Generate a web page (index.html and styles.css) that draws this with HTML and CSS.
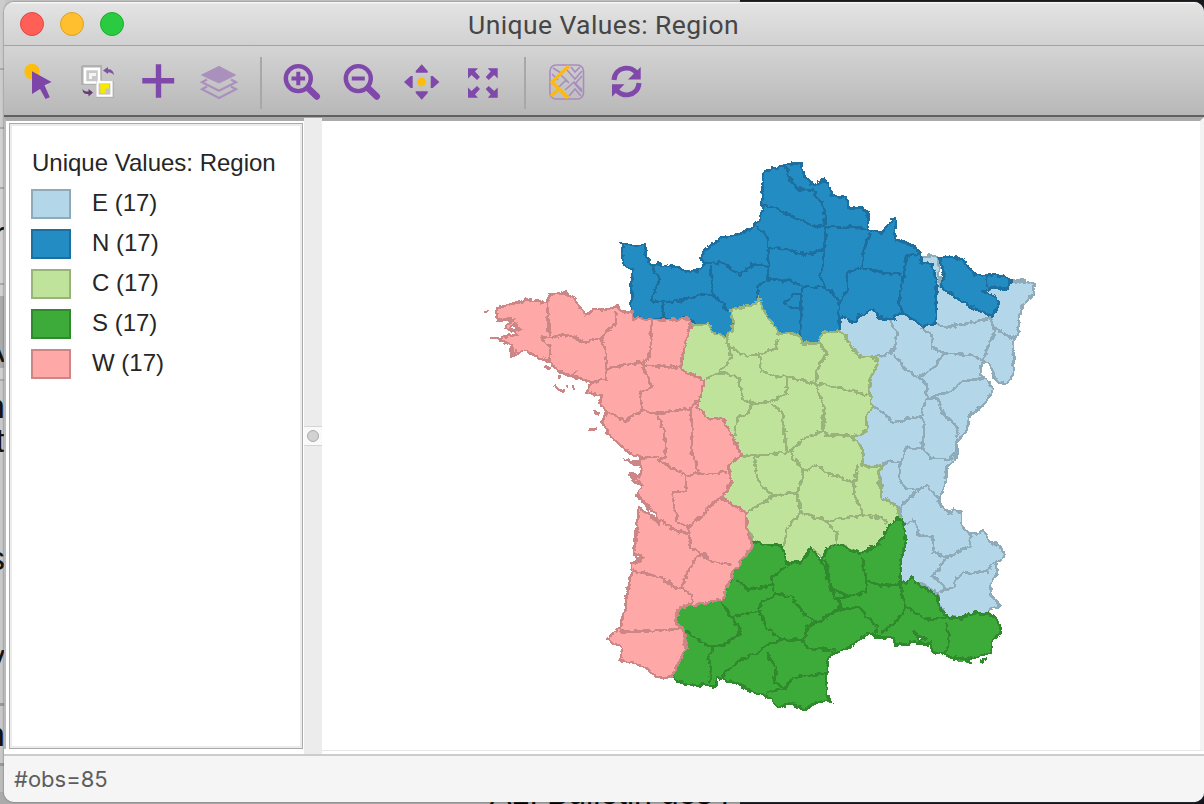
FILE: index.html
```html
<!DOCTYPE html>
<html lang="en">
<head>
<meta charset="utf-8">
<title>Unique Values: Region</title>
<link rel="stylesheet" href="styles.css">
</head>
<body>
<div class="desktop">
  <div class="behind-top"></div>
  <div class="behind-left">
    <span style="top:218px">r</span><span style="top:335px">A</span><span style="top:391px">n</span><span style="top:425px">t</span><span style="top:543px">s</span><span style="top:641px">y</span><span style="top:719px">n</span>
  </div>
  <div class="behind-bottom"><span>ALI Bulletin des l</span></div>
  <div class="window">
    <header class="titlebar">
      <div class="lights"><i class="red"></i><i class="yellow"></i><i class="green"></i></div>
      <h1>Unique Values: Region</h1>
    </header>
    <nav class="toolbar">
      <button><svg viewBox="0 0 36 36"><circle cx="12" cy="7.5" r="7.7" fill="#fdbd0c"/><path d="M12 7.2 31.6 18 24.5 21.2 29.8 33.3 25.5 35 20 25 12 30Z" fill="#7e45a8"/></svg></button>
      <button><svg viewBox="0 0 36 36"><path d="M2 2H21V16M2 2V20H16" fill="none" stroke="#b0b0b0" stroke-width="2"/><rect x="5" y="5" width="14" height="13.5" fill="#c9c9c9" stroke="#fff" stroke-width="2.5"/><path d="M9 9H16V12H12V15H9Z" fill="#f4f4f4"/><rect x="16" y="17" width="18" height="17" fill="#b0b0b0"/><rect x="17.5" y="18.2" width="14" height="13.5" fill="#c4c4c4" stroke="#fff" stroke-width="2.2"/><path d="M20.3 20H29V24.5H25.5V29H20.3Z" fill="#f5ea00"/><path d="M23 6.5 28 3V5.2C31.5 5 33.5 7 34 11 31.5 8.8 30 8.4 28 8.6V10Z" fill="#8153a0"/><path d="M13 28.5 8.5 25V27.5C5 27.5 4 27 2.5 25 2.5 29 5 30.2 8.5 30V32.5Z" fill="#653a79"/></svg></button>
      <button><svg viewBox="0 0 36 36"><path d="M18.5.3V33.8M2.3 16.7H34.2" fill="none" stroke="#7f48aa" stroke-width="5.4"/></svg></button>
      <button><svg viewBox="0 0 36 36"><g fill="#aa91bd" stroke="#aa91bd"><path d="M19 2.4 35.5 11 19 19 1.5 11Z"/><path d="M7 15.5 2 18.3 19 26.7 36 18.3 31 15.5 M7 22.5 2 25.3 19 34 36 25.3 31 22.5" fill="none" stroke-width="2.2"/></g></svg></button>
      <hr>
      <button><svg viewBox="0 0 36 36"><g fill="none" stroke="#7f48aa"><circle cx="15.3" cy="14.6" r="12.5" stroke-width="4.4"/><path d="M25 24 33.7 32.4" stroke-width="6.6" stroke-linecap="round"/><path d="M8.5 14.5H22.1M15.3 7.7V21.3" stroke-width="4"/></g></svg></button>
      <button><svg viewBox="0 0 36 36"><g fill="none" stroke="#7f48aa"><circle cx="15.3" cy="14.6" r="12.5" stroke-width="4.4"/><path d="M25 24 33.7 32.4" stroke-width="6.6" stroke-linecap="round"/><path d="M8.8 14.5H21.8" stroke-width="4"/></g></svg></button>
      <button><svg viewBox="0 0 36 36"><circle cx="18.7" cy="18" r="4.4" fill="#fdbd0c"/><path d="M18.7.3 24.7 7V8.7H12.7V7ZM18.7 35.7 24.7 29V27.3H12.7V29ZM1 18 7.7 12H9.7V24H7.7ZM36.4 18 29.7 12H27.7V24H29.7Z" fill="#7f48aa"/></svg></button>
      <button><svg viewBox="0 0 36 36"><g fill="#7f48aa"><path d="M5 4.3H15L12 7.5 17 13 14 16 8.5 11 5 14.5Z"/><path d="M34.7 4.3H24.7L27.7 7.5 22.7 13 25.7 16 31.2 11 34.7 14.5Z"/><path d="M5 33.7H15L12 30.5 17 25 14 22 8.5 27 5 23.5Z"/><path d="M34.7 33.7H24.7L27.7 30.5 22.7 25 25.7 22 31.2 27 34.7 23.5Z"/></g></svg></button>
      <hr class="second">
      <button><svg viewBox="0 0 36 36"><g fill="none" stroke="#a98cbf" stroke-width="1.6"><rect x="2" y="1" width="33.5" height="34" rx="6"/><path d="M13 11 21 19M19 6 27 15 34 7M23 3 27 8 32 3M17 26 26 18 34 26M21 32 27 25 33 32M34 12 27 20 34 28M4 10 10 16M5 4 13 9M10 24 18 16"/></g><path d="M21 2 4 18 20 34M3 32 12 24" fill="none" stroke="#fdb913" stroke-width="3.3"/></svg></button>
      <button><svg viewBox="0 0 36 36"><g fill="none" stroke="#7f48aa" stroke-width="5"><path d="M6 16C7 2 24 1 29 10M31 19C30 33 13 34 8 25"/></g><path d="M32.7 3V15.5H20ZM4 32.7V20.3H16.5Z" fill="#7f48aa"/></svg></button>
    </nav>
    <main class="content">
      <aside class="legend">
        <div class="legend-box">
          <h2>Unique Values: Region</h2>
          <ul>
            <li><i class="east"></i>E (17)</li>
            <li><i class="north"></i>N (17)</li>
            <li><i class="center"></i>C (17)</li>
            <li><i class="south"></i>S (17)</li>
            <li><i class="west"></i>W (17)</li>
          </ul>
        </div>
      </aside>
      <div class="splitter"><div class="grip"><i></i></div></div>
      <section class="map">
        <svg viewBox="322 121 878 629">
          <defs><filter id="coast" filterUnits="userSpaceOnUse" x="470" y="150" width="580" height="570" color-interpolation-filters="sRGB"><feTurbulence type="fractalNoise" baseFrequency=".16" numOctaves="2" seed="4"/><feDisplacementMap in="SourceGraphic" scale="6" xChannelSelector="R" yChannelSelector="G"/></filter></defs>
          <g transform="translate(-1 .5)"><g filter="url(#coast)" shape-rendering="crispEdges">
            <g class="dept east">
              <path d="M840 316 921 258 935 254 939 258 941 286 990 288 1012 280 1025 281 1036 284 1033 295 1022 308 1019 333 1014 340 1015 373 1007 383 1000 383 993 373 992 366 986 361 982 363 981 374 988 378 994 389 988 400 970 417 969 428 957 442 958 453 947 470 945 487 940 498 945 510 952 513 955 508 963 513 963 527 968 531 977 533 985 531 993 543 1002 545 1005 556 997 562 999 573 992 583 992 595 1002 605 992 608 990 613 973 613 962 618 947 616 939 603 938 593 923 583 900 582 903 557 907 540 902 518 900 507 883 498 880 470 863 465 865 450 853 437 868 430 867 417 873 405 870 390 872 377 877 357 860 356 847 337 840 331Z"/>
              <path class="line" d="M937 322 945 327 968 323 992 317 994 327 1015 338M890 320 898 332 895 347 892 353 877 356M895 353 907 370 920 377 935 367 945 353 933 347 933 335 922 327M945 353 973 355 985 360 987 350 997 328M920 377 927 383 928 398 953 390 963 381 987 377M927 398 922 415 895 422 883 412 873 405M928 398 939 398 942 410 960 428 957 438M922 415 926 427 923 447 932 458 948 459 958 452M923 448 907 447 902 460 900 477 907 488 920 490 927 485 940 500M901 461 885 462 883 467M917 491 903 505 901 510M905 522 915 520 920 535 933 536 935 552 947 557 972 545 972 537 967 530M947 557 940 568 933 575 947 588 940 592 955 587 957 577 965 572 987 572 997 560M954 588 957 577"/>
            </g>
            <g class="dept north">
              <path d="M622 243 637 246 647 244 647 257 653 265 660 264 680 267 687 271 697 271 705 264 702 257 707 247 717 242 723 237 742 233 752 228 760 220 763 210 764 174 773 168 793 163 803 163 805 175 814 184 824 180 829 183 833 195 847 197 849 207 863 207 870 213 868 228 882 232 892 222 892 218 897 218 896 230 897 239 913 245 922 253 923 262 933 264 938 282 937 303 937 322 925 326 902 312 895 319 880 318 875 309 860 315 857 321 842 317 840 331 823 332 818 343 803 343 800 334 780 333 770 318 764 310 760 296 757 303 732 309 735 323 728 338 713 332 710 323 697 325 690 318 663 319 635 318 632 310 633 270 624 262Z"/>
              <path d="M940 258 952 256 965 259 975 275 988 274 1003 275 1012 280 1009 288 990 287 986 292 998 297 999 308 993 316 963 302 942 286 945 272Z"/>
              <path class="line" d="M787 165 790 178 800 189 813 190 823 202 826 215 825 227M763 205 778 208 797 218 813 225 827 227 850 226 870 229M827 228 825 250 823 270 821 277 828 288 840 300 840 327M758 225 769 238 770 267 768 280 758 288 758 298M770 247 790 249 807 255 825 248M768 279 790 280 805 286 828 287M803 286 802 340M803 294 793 294 786 302 793 308 803 309M705 263 723 262 740 275 753 264 769 266M712 265 713 283 715 295 730 310M653 265 660 280 652 300 663 302 682 300 703 294 715 295M663 302 665 319M871 232 864 253 864 266M840 303 848 290 848 272 864 267 888 273 903 273M922 254 907 255 905 273 900 300 903 312M988 275 988 286"/>
            </g>
            <g class="dept center">
              <path d="M760 296 764 310 770 318 780 333 800 334 803 343 818 343 823 332 840 331 847 337 860 356 877 357 878 364 872 377 870 390 873 405 867 417 868 430 853 437 865 450 863 466 883 466 879 473 883 497 898 507 901 518 893 522 880 543 862 553 850 548 840 544 827 548 825 558 812 547 802 562 787 562 782 545 768 545 754 540 748 527 748 513 722 497 733 482 729 466 743 454 733 437 723 417 712 419 698 407 705 379 682 370 683 353 692 325 710 323 713 331 728 338 735 323 732 309 757 303Z"/>
              <path class="line" d="M728 338 730 345 732 357 720 372 708 378M732 347 748 356 760 353 777 348 778 338M760 353 762 370 777 376 790 377 817 383 818 370 827 353 820 340M817 383 840 387 870 395M720 372 740 377 743 398 752 403 770 402 788 393 788 377M752 403 750 412 738 418 735 437M773 403 783 412 788 452 757 455 743 455M817 383 825 407 824 430 807 437 790 452M824 430 827 435 853 435M791 453 805 470 798 492 775 495 760 483 755 457M805 470 817 464 827 472 855 482 859 463M855 482 855 493 865 515 827 520 802 513 798 492M775 495 748 512M802 513 788 527 785 547M827 520 837 532 838 542M865 515 883 518 888 523"/>
            </g>
            <g class="dept south">
              <path d="M754 541 768 545 782 545 787 562 802 562 812 547 823 562 827 548 840 545 862 553 880 543 893 522 898 518 904 520 907 540 903 557 900 582 908 582 912 577 917 583 928 588 938 597 940 608 950 617 962 618 970 613 990 613 997 618 1003 632 992 642 992 652 973 658 953 657 945 653 933 652 932 643 917 643 911 641 910 644 896 644 895 638 877 636 870 632 850 647 833 653 827 665 827 693 832 702 820 701 805 709 793 703 780 707 767 695 753 691 737 683 718 677 717 686 685 684 673 676 687 648 677 623 680 607 723 599 737 567Z"/>
              <path d="M954 660 960 659 967 660 972 663M981 661 988 659"/>
              <path class="line" d="M738 580 750 589 773 585 773 577 788 565M773 585 777 593 763 602 760 610 733 617 723 602M777 593 793 597 805 613 817 622 827 617 842 605 830 585 826 563M760 610 767 627 783 639 805 639 808 627 817 622M805 639 807 647 837 650M733 617 742 630 730 642 715 647 703 642 687 630M715 647 709 657 713 670 710 683M783 639 767 645 760 652 743 658 725 673 724 678M767 652 777 667 775 682 787 688 793 677 827 673M787 688 767 692M827 560 832 588 850 596 867 592 867 577 863 557M867 579 882 586 900 583M850 596 840 598 842 608 860 607 878 627 877 635M842 608 807 627M900 583 907 607 898 620 882 633M907 607 927 619 950 617M947 622 950 640 947 653"/>
              <path class="water" d="M915 631 920 636 926 637 920 642Z"/>
            </g>
            <g class="dept west">
              <path d="M635 318 633 311 622 311 618 306 605 310 595 309 586 316 575 297 567 293 550 294 548 302 532 299 510 304 498 308 498 319 513 319 506 327 512 331 514 324 522 328 515 330 518 334 498 338 512 345 512 355 527 351 548 360 562 372 578 377 593 382 587 392 602 395 600 402 607 412 603 422 613 437 630 452 642 457 640 462 625 459 643 466 640 476 631 473 643 485 638 495 647 503 660 522 640 507 635 553 643 560 633 563 633 570 622 627 607 639 623 647 621 659 647 667 658 677 672 677 687 648 685 630 677 623 680 607 723 599 730 582 737 567 753 547 748 527 748 513 722 497 733 482 729 466 743 454 733 437 723 417 712 419 698 407 705 379 682 370 683 353 692 325 690 318 663 320Z"/>
              <path d="M484 311H489M492 338H497M545 368H552M556 384 559 389 565 391M569 384V388M561 374V379M574 386 576 389M595 411 600 413M590 429H597M631 474 635 481 641 484"/>
              <path class="line" d="M548 302 550 335M542 337 570 335 587 342 602 338 617 323 617 310M542 337 552 348 550 362M602 338 607 350 607 378 593 382M607 368 637 363 647 362 653 347 652 319M643 365 677 367 682 363M643 365 653 387 640 393 643 410 627 420 607 412M643 410 657 413 692 408 698 400M657 413 665 430 667 457M692 408 693 430 693 453 698 460 698 473 687 475 660 460 667 457M642 457 660 457M698 473 727 472M687 475 687 490 673 492 678 520 690 527 720 498M658 518 677 530 690 533 690 527M690 533 692 548 703 553 713 561 733 565M703 553 697 557 688 573 683 588 677 588 662 577 635 570M683 588 693 595 693 605M622 631 647 631 685 628M573 375 578 371M512 355 517 349"/>
              <path class="water" d="M636 553 643 557 637 560ZM647 504 657 513 659 522 651 514Z"/>
            </g>
          </g></g>
        </svg>
      </section>
    </main>
    <footer>#obs=85</footer>
  </div>
</div>
</body>
</html>
```
FILE: styles.css
```css
* { box-sizing: border-box; }
body { margin: 0; font-family: "Liberation Sans", Arial, sans-serif; }
.desktop { position: relative; width: 1204px; height: 804px; overflow: hidden; background: #c5c5c5; }
.behind-top { position: absolute; inset: 0 0 auto 740px; height: 14px; background: #17181c; }
.behind-left { position: absolute; inset: 0 auto 0 0; width: 5px; overflow: hidden; font-size: 34px; line-height: 30px; background: linear-gradient(#ccc 0 68px, #aaa 68px 70px, #ccc 70px 127px, #aaa 127px 129px, #d2d2d2 129px 187px, #aaa 187px 189px, #d2d2d2 189px 283px, #aaa 283px 285px, #d0d0d0 285px 296px, #aaa 296px 368px, #d0d0d0 368px 379px, #aaa 379px 381px, #c8c8c8 381px 703px, #999 703px 706px, #c8c8c8 706px 763px, #999 763px 766px, #bbb 766px); }
.behind-left span { position: absolute; right: 0; color: #111; }
.behind-bottom { position: absolute; inset: auto 0 0 0; height: 12px; background: linear-gradient(90deg, #aaa 0 740px, #14151c 740px); overflow: hidden; }
.behind-bottom span { position: absolute; left: 490px; bottom: -8px; font-size: 32px; white-space: nowrap; }
.window { position: absolute; left: 4px; top: 2px; width: 1200px; height: 800px; display: flex; flex-direction: column; overflow: hidden; border-radius: 10px; background: #ececec; box-shadow: 0 0 2px #555; }
.titlebar { flex: 0 0 44px; display: flex; align-items: center; padding-left: 16px; background: linear-gradient(#f5f5f5 0 1px, #e3e3e3 2px, #d1d1d1); border-bottom: 1px solid #a3a3a3; }
.lights { display: flex; gap: 16px; }
.lights i { width: 24px; height: 24px; border-radius: 50%; border: 1px solid #df4744; background: #ff5f57; }
.lights .yellow { background: #ffbf2e; border-color: #dda023; }
.lights .green { background: #2aca41; border-color: #1bac2c; }
h1 { flex: 1; margin: 2px 124px 0 3px; text-align: center; font: 400 26.5px/40px Roboto, sans-serif; color: #464646; letter-spacing: .4px; }
.toolbar { flex: 0 0 71px; display: flex; align-items: center; padding: 2px 4px 0; background: linear-gradient(#d4d4d4, #b8b8b8); border-bottom: 2px solid #606060; }
.toolbar button { flex: none; width: 60px; height: 60px; padding: 0; border: 0; background: none; display: grid; place-items: center; }
.toolbar svg { width: 36px; height: 36px; overflow: visible; }
.toolbar hr { width: 2px; height: 52px; margin: 2px 9px 0 12px; border: 0; background: #a8a8a8; }
.toolbar hr.second { margin: 2px 10px 0 13px; }
.content { flex: 0 0 639px; display: flex; background: #fff; border-bottom: 2px solid #ccc; }
.legend { width: 300px; height: 632px; padding: 2px 1px 0 3px; border-top: 4px solid #aaa; border-left: 2px solid #bbb; background: #fff; }
.legend-box { width: 294px; height: 626px; border: 1px solid #aaa; box-shadow: inset 0 0 0 2px #ececec; padding: 24px 0 0 21px; color: #262626; }
h2 { margin: 0 0 0 1px; font-weight: 400; font-size: 24px; line-height: 30px; white-space: nowrap; }
ul { margin: 5px 0 0; padding: 0; list-style: none; }
li { display: flex; align-items: center; gap: 21px; height: 40px; font-size: 24px; line-height: 40px; }
li i { width: 40px; height: 30px; margin-top: 2px; border: 2px solid; }
li i.east { background: #b3d6e8; border-color: #8fabba; }
li i.north { background: #238cc2; border-color: #1c6f9f; }
li i.center { background: #bfe39a; border-color: #98b47b; }
li i.south { background: #3dab39; border-color: #308a2d; }
li i.west { background: #fea9a7; border-color: #cb8685; }
.splitter { width: 18px; background: #ececec; padding-top: 308px; border-top: 1px solid #aaa; }
.grip { height: 20px; display: grid; place-items: center; background: #f9f9f9; border: solid #d5d5d5; border-width: 1px 0; }
.grip i { width: 12px; height: 12px; border-radius: 50%; background: #d2d2d2; border: 1px solid #aaa; }
.map { flex: 1; height: 634px; border-top: 4px solid #aaa; border-right: 4px solid #f3f3f3; border-bottom: 1px solid #e6e6e6; overflow: hidden; }
.map svg { display: block; width: 878px; height: 629px; }
.dept { stroke-width: 2.5; }
.dept.east { fill: #b3d6e8; stroke: #8fabba; }
.dept.north { fill: #238cc2; stroke: #1c6f9f; }
.dept.center { fill: #bfe39a; stroke: #98b47b; }
.dept.south { fill: #3dab39; stroke: #308a2d; }
.dept.west { fill: #fea9a7; stroke: #cb8685; }
.dept .line { fill: none; }
.dept .water { fill: #fff; }
footer { flex: 1; padding: 0 10px; background: #f5f5f5; font: 400 22px/46px Inter, sans-serif; color: #5d5d5d; }
```
